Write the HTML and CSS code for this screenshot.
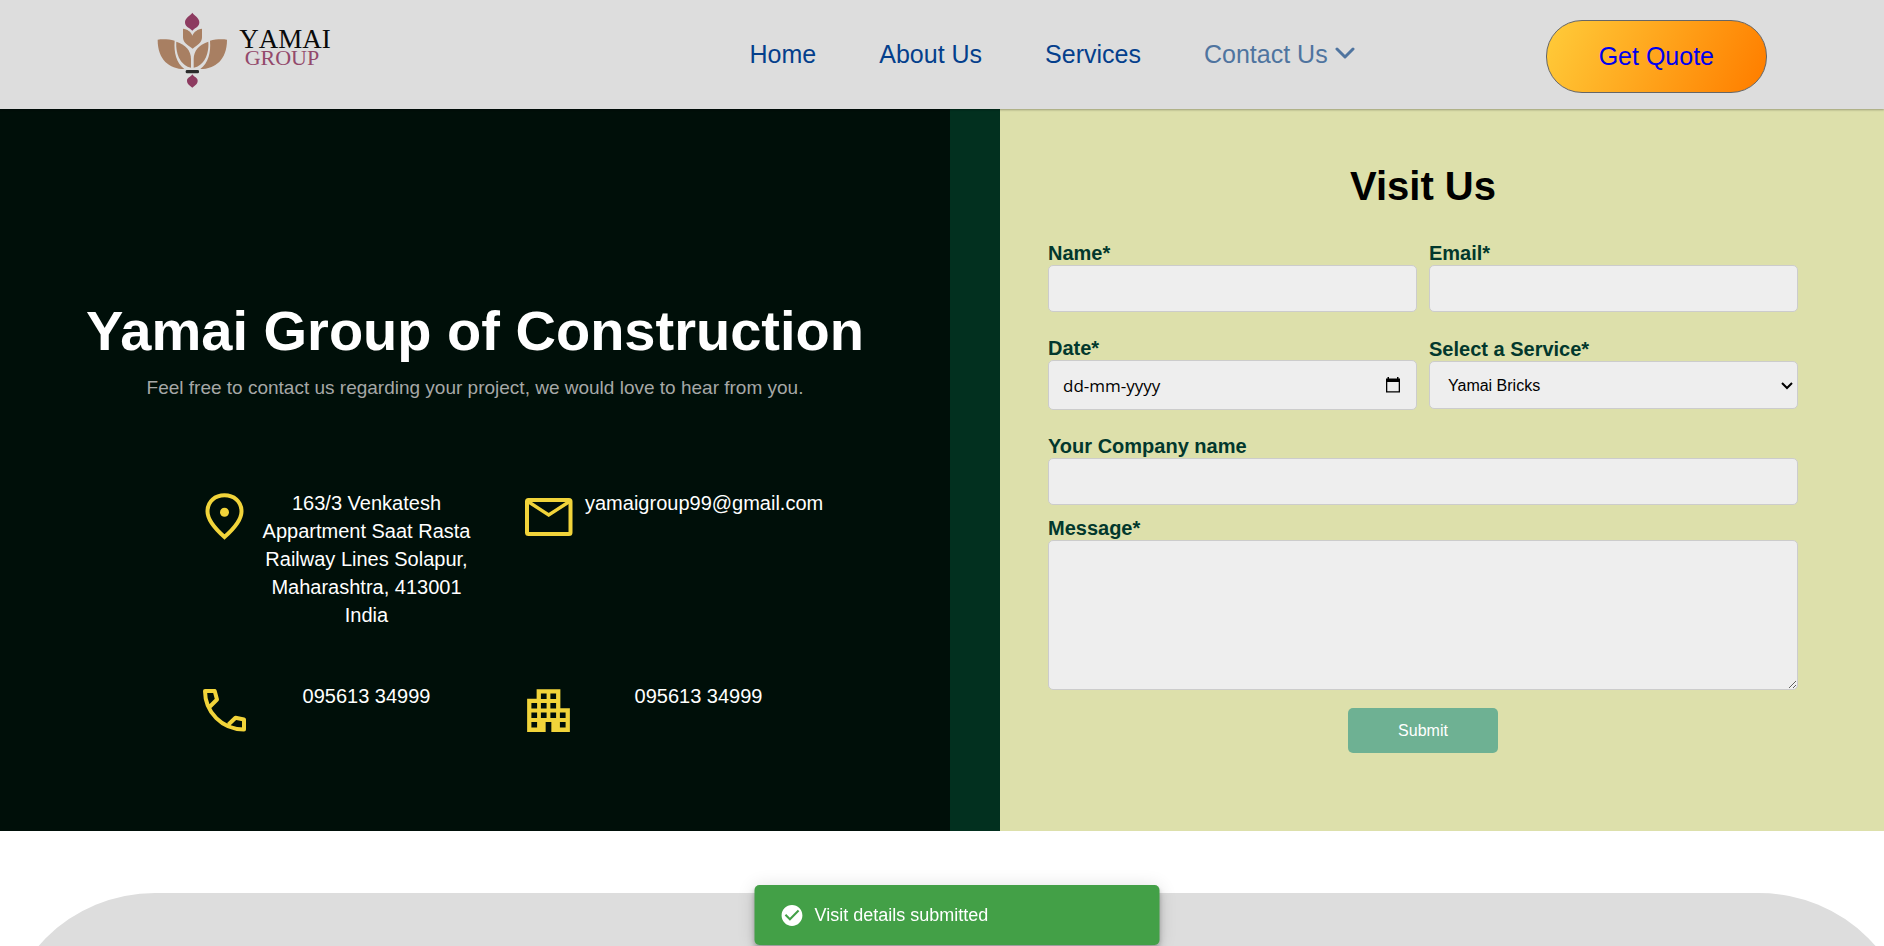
FILE: index.html
```html
<!DOCTYPE html>
<html lang="en">
<head>
<meta charset="utf-8">
<meta name="viewport" content="width=device-width, initial-scale=1">
<title>Yamai Group - Contact Us</title>
<link rel="stylesheet" href="styles.css">
</head>
<body>
<header class="header">
  <a class="logo" href="#" aria-label="Yamai Group">
    <svg width="200" height="109" viewBox="30 0 600 327">
      <g fill="#8d3b60">
        <path d="M157 38C164 48 178 53 178 67C178 80 167 83 157 92C147 83 135 80 135 67C135 53 150 48 157 38Z"/>
        <path d="M157 223C162 231 173 233 173 242C173 253 164 256 157 263C150 256 141 253 141 242C141 233 152 231 157 223Z"/>
      </g>
      <g fill="#a87f62">
        <path d="M129 86C142 88 153 94 157 107C162 94 173 88 186 86V112C186 128 173 135 158 146C142 135 129 128 129 112Z"/>
        <path d="M53 119C69 117 88 118 104 122C101 158 109 188 133 207C88 207 53 179 53 119Z"/>
        <path d="M261 119C245 117 226 118 210 122C213 158 205 188 181 207C226 207 261 179 261 119Z"/>
        <path d="M109 125C136 134 153 151 153 177V203C124 198 106 164 109 125Z"/>
        <path d="M205 125C178 134 161 151 161 177V203C190 198 208 164 205 125Z"/>
      </g>
      <rect x="137" y="210" width="40" height="10" rx="4" fill="#2b2b2b"/>
      <text class="logo-name" x="298" y="143">YAMAI</text>
      <text class="logo-group" x="314" y="194">GROUP</text>
    </svg>
  </a>
  <nav class="nav">
    <a href="#">Home</a>
    <a href="#">About Us</a>
    <a href="#">Services</a>
    <a class="current" href="#">Contact Us
      <svg width="20" height="20" viewBox="0 0 20 20" fill="none" stroke="currentColor" stroke-width="3" stroke-linecap="round" stroke-linejoin="round"><path d="M2 4l8 8 8-8"/></svg>
    </a>
  </nav>
  <a class="quote" href="#">Get Quote</a>
</header>

<main class="hero">
  <section class="intro">
    <h1>Yamai Group of Construction</h1>
    <p class="lead">Feel free to contact us regarding your project, we would love to hear from you.</p>
    <div class="contacts">
      <div class="contact">
        <svg class="line" viewBox="0 0 57 57"><path d="M28.500 48C16 37 11.500 29 11.500 22.500C11.500 12 19.500 6.300 28.500 6.300S45.500 12 45.500 22.500C45.500 29 41 37 28.500 48Z"/><circle class="dot" cx="28.500" cy="23.300" r="4.500"/></svg>
        <p>163/3 Venkatesh Appartment Saat Rasta Railway Lines Solapur, Maharashtra, 413001 India</p>
      </div>
      <div class="contact">
        <svg class="line" viewBox="0 0 57 57"><rect x="7" y="11" width="43.500" height="34" rx="1.500"/><path d="M8 12.500L28.700 26L49.500 12.500" stroke-width="3.400"/></svg>
        <p>yamaigroup99@gmail.com</p>
      </div>
      <div class="contact">
        <svg class="line" viewBox="0 0 57 57"><path d="M14 24.500L21 17.500L18.700 9H9C9 30 26 47.500 48 47.500V37.500L39.500 35.700L32.500 42.500" stroke-linejoin="round"/></svg>
        <p>095613 34999</p>
      </div>
      <div class="contact">
        <svg viewBox="0 0 24 24"><path fill-rule="evenodd" d="M17 11V3H7v4H3v14h7.800v-4.200h2.400V21H21V11zM8.800 4.800h2.400v2.400H8.800zM12.800 4.800h2.400v2.400h-2.400zM4.800 8.800h2.400v2.400H4.800zM8.800 8.800h2.400v2.400H8.800zM12.800 8.800h2.400v2.400h-2.400zM4.800 12.800h2.400v2.400H4.800zM8.800 12.800h2.400v2.400H8.800zM12.800 12.800h2.400v2.400h-2.400zM16.800 12.800h2.400v2.400h-2.400zM4.800 16.800h2.400v2.400H4.800zM16.800 16.800h2.400v2.400h-2.400z"/></svg>
        <p>095613 34999</p>
      </div>
    </div>
  </section>

  <form class="visit">
    <h2>Visit Us</h2>
    <div class="row">
      <div class="field"><label for="name">Name*</label><input id="name" type="text"></div>
      <div class="field"><label for="email">Email*</label><input id="email" type="email"></div>
    </div>
    <div class="row">
      <div class="field">
        <label for="date">Date*</label>
        <div class="control">
          <input id="date" class="date" type="text" placeholder="dd-mm-yyyy">
          <svg class="calendar" width="16" height="16" viewBox="0 0 16 16"><path d="M2.500 0H4v1.500h8V0h1.500v1.500H15V15.500H1V1.500h1.500zM2.300 5v9.200h11.400V5z" fill-rule="evenodd"/></svg>
        </div>
      </div>
      <div class="field">
        <label for="service">Select a Service*</label>
        <div class="control">
          <select id="service"><option>Yamai Bricks</option></select>
          <svg class="arrow" width="12" height="8" viewBox="0 0 12 8" fill="none" stroke="#000" stroke-width="2"><path d="M1 1l5 5 5-5"/></svg>
        </div>
      </div>
    </div>
    <div class="field company"><label for="company">Your Company name</label><input id="company" type="text"></div>
    <div class="field message"><label for="message">Message*</label><textarea id="message"></textarea></div>
    <button class="submit" type="submit">Submit</button>
  </form>
</main>

<footer class="footer"></footer>

<div class="toast" role="status">
  <svg width="25" height="25" viewBox="0 0 24 24" fill="#fff"><path d="M12 2C6.500 2 2 6.500 2 12S6.500 22 12 22 22 17.500 22 12 17.500 2 12 2M10 17L5 12L6.410 10.590L10 14.170L17.590 6.580L19 8L10 17Z"/></svg>
  <span>Visit details submitted</span>
</div>
</body>
</html>
```
FILE: styles.css
```css
* {
  box-sizing: border-box;
}

body {
  margin: 0;
  min-height: 100vh;
  display: flex;
  flex-direction: column;
  overflow: hidden;
  background: #fff;
  font-family: "Liberation Sans", Arial, sans-serif;
}

h1, h2, p {
  margin: 0;
}

a {
  text-decoration: none;
}

/* Header */
.header {
  position: relative;
  z-index: 1;
  display: flex;
  align-items: center;
  padding: 0 117px 0 150px;
  background: #ddd;
  box-shadow: 0 1px 2px rgba(0, 0, 0, 0.3);
  font-size: 25px;
}

.logo svg {
  display: block;
}

.logo-name,
.logo-group {
  font-family: "Liberation Serif", "Times New Roman", serif;
  font-kerning: none;
}

.logo-name {
  font-size: 81px;
  fill: #0a0a0a;
}

.logo-group {
  font-size: 66px;
  fill: #93496b;
}

.nav {
  display: flex;
  gap: 63px;
  margin-left: auto;
  margin-right: 191px;
}

.nav a {
  display: flex;
  align-items: center;
  gap: 7px;
  color: #043f8c;
}

.nav .current {
  color: #4f749f;
}

.quote {
  margin-top: 4px;
  padding: 21px 52px;
  border: 1px solid #666;
  border-radius: 36px;
  background: linear-gradient(115deg, #ffc837 5%, #ff8000 95%);
  color: #00e;
  line-height: 29px;
}

/* Hero */
.hero {
  display: grid;
  grid-template-columns: 950fr 884fr;
  column-gap: 50px;
  background: #02301f;
}

.intro {
  padding-top: 190px;
  background: #000f09;
  color: #fff;
  text-align: center;
}

.intro h1 {
  font-size: 56px;
  line-height: 64px;
}

.lead {
  margin-top: 13px;
  color: #a6a8a7;
  font-size: 19px;
  line-height: 24px;
}

.contacts {
  display: grid;
  grid-template-columns: 276fr 292fr;
  gap: 53px 48px;
  margin-top: 89px;
  padding: 0 138px 0 196px;
}

.contact {
  display: flex;
  align-items: flex-start;
  gap: 8px;
  min-width: 0;
}

.contact svg {
  flex: none;
  width: 57px;
  height: 57px;
  fill: #f1d43a;
}

.contact .line {
  fill: none;
  stroke: #f1d43a;
  stroke-width: 4;
}

.contact .dot {
  fill: #f1d43a;
  stroke: none;
}

.contact p {
  flex: 1;
  min-width: 0;
  font-size: 20px;
  line-height: 28px;
}

/* Form */
.visit {
  display: flex;
  flex-direction: column;
  padding: 53px 86px 78px 48px;
  background: #dde0ab;
}

.visit h2 {
  margin-bottom: 31px;
  font-size: 40px;
  line-height: 48px;
  text-align: center;
}

.row {
  display: grid;
  grid-template-columns: 1fr 1fr;
  align-items: center;
  gap: 12px;
  margin-bottom: 24px;
}

.field {
  display: flex;
  flex-direction: column;
}

.field label {
  color: #02382d;
  font-size: 20px;
  font-weight: 600;
  line-height: 24px;
}

.field input,
.field select,
.field textarea {
  display: block;
  width: 100%;
  height: 47px;
  padding: 0 14px;
  border: 1px solid #ccc;
  border-radius: 5px;
  background: #eee;
  color: #000;
  font-family: inherit;
  font-size: 16px;
}

.field select {
  height: 48px;
  padding: 0 18px;
  appearance: none;
}

.field textarea {
  height: 150px;
  padding: 14px;
}

.control {
  position: relative;
}

.field .date {
  height: 50px;
  font-family: "Open Sans", sans-serif;
  font-size: 17px;
}

.date::placeholder {
  color: #000;
  opacity: 1;
}

.calendar {
  position: absolute;
  top: 17px;
  right: 16px;
}

.arrow {
  position: absolute;
  top: 21px;
  right: 5px;
  pointer-events: none;
}

.message {
  margin-top: 11px;
}

.submit {
  align-self: center;
  width: 150px;
  height: 45px;
  margin-top: 18px;
  border: 0;
  border-radius: 5px;
  background: #6eb193;
  color: #fff;
  font-family: inherit;
  font-size: 16px;
}

/* Footer band, wider than the window */
.footer {
  flex: none;
  width: calc(100% + 30px);
  height: 400px;
  margin-top: 62px;
  border-radius: 155px 155px 0 0;
  background: #ddd;
}

/* Toast */
.toast {
  position: fixed;
  z-index: 2;
  bottom: 1px;
  left: calc(50% + 15px);
  transform: translateX(-50%);
  display: flex;
  align-items: center;
  gap: 10px;
  width: 405px;
  height: 60px;
  padding: 0 25px;
  border-radius: 5px;
  background: #43a047;
  box-shadow: 0 3px 5px -1px rgba(0, 0, 0, 0.2), 0 6px 10px rgba(0, 0, 0, 0.14), 0 1px 18px rgba(0, 0, 0, 0.12);
  color: #fff;
  font-size: 18px;
}
```
